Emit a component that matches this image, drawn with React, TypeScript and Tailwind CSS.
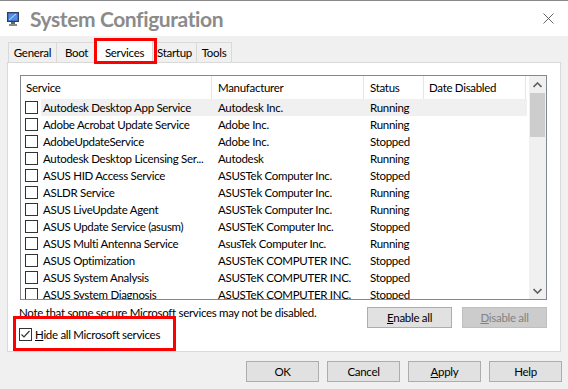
import React from 'react';

interface Service {
  name: string;
  maker: string;
  status: string;
}

const services: Service[] = [
  { name: 'Autodesk Desktop App Service', maker: 'Autodesk Inc.', status: 'Running' },
  { name: 'Adobe Acrobat Update Service', maker: 'Adobe Inc.', status: 'Running' },
  { name: 'AdobeUpdateService', maker: 'Adobe Inc.', status: 'Stopped' },
  { name: 'Autodesk Desktop Licensing Ser...', maker: 'Autodesk', status: 'Running' },
  { name: 'ASUS HID Access Service', maker: 'ASUSTek Computer Inc.', status: 'Stopped' },
  { name: 'ASLDR Service', maker: 'ASUSTek Computer Inc.', status: 'Running' },
  { name: 'ASUS LiveUpdate Agent', maker: 'ASUSTek Computer Inc.', status: 'Running' },
  { name: 'ASUS Update Service (asusm)', maker: 'ASUSTeK Computer Inc.', status: 'Stopped' },
  { name: 'ASUS Multi Antenna Service', maker: 'AsusTek Computer Inc.', status: 'Running' },
  { name: 'ASUS Optimization', maker: 'ASUSTeK COMPUTER INC.', status: 'Stopped' },
  { name: 'ASUS System Analysis', maker: 'ASUSTeK COMPUTER INC.', status: 'Stopped' },
  { name: 'ASUS System Diagnosis', maker: 'ASUSTeK COMPUTER INC.', status: 'Stopped' },
];

function Checkbox({ checked = false }: { checked?: boolean }) {
  return (
    <div className="w-[13px] h-[13px] shrink-0 border border-[#333] bg-white flex items-center justify-center">
      {checked && (
        <svg width="11" height="11" viewBox="0 0 11 11">
          <path d="M1.5 5.5 L4 8 L9.5 2" fill="none" stroke="#333" strokeWidth="1.2" />
        </svg>
      )}
    </div>
  );
}

function Button({ children, disabled = false, className = '' }: { children: React.ReactNode; disabled?: boolean; className?: string }) {
  return (
    <div
      className={`h-[21px] flex items-center justify-center border ${
        disabled ? 'bg-[#cccccc] border-[#bfbfbf] text-[#838383]' : 'bg-[#e1e1e1] border-[#adadad] text-black'
      } ${className}`}
    >
      {children}
    </div>
  );
}

function AppIcon() {
  return (
    <svg width="12" height="16" viewBox="0 0 12 16">
      <rect x="0.5" y="1.5" width="11" height="9" fill="#2a5db0" stroke="#3a3a5a" />
      <rect x="1.5" y="2.5" width="9" height="7" fill="#4f8ee8" />
      <path d="M2 9 L9 3" stroke="#cfe2ff" strokeWidth="1" />
      <rect x="4" y="11" width="4" height="2" fill="#666" />
      <rect x="2" y="13" width="8" height="2" fill="#8a8a8a" />
    </svg>
  );
}

export default function App() {
  return (
    <div className="w-[568px] h-[389px] bg-[#f0f0f0] overflow-hidden relative font-['Lato',sans-serif] text-[11.5px] tracking-[-0.3px] text-black leading-[15px]">
      <div className="h-px bg-[#8a8a8a]" />

      {/* Title bar */}
      <div className="h-[35px] bg-white flex items-center pl-[7px] pr-[14px]">
        <AppIcon />
        <span className="ml-[11px] text-[21px] leading-[26px] font-bold text-[#8b8b8b] tracking-[-0.4px]">System Configuration</span>
        <svg className="ml-auto" width="11" height="11" viewBox="0 0 11 11">
          <path d="M0.5 0.5 L10.5 10.5 M10.5 0.5 L0.5 10.5" stroke="#555" strokeWidth="0.9" />
        </svg>
      </div>

      {/* Tabs */}
      <div className="flex items-end h-[22px] mt-[4px] pl-[8px] relative z-10">
        <div className="w-[49px] h-[20px] flex items-center justify-center border border-b-0 border-[#d9d9d9]">General</div>
        <div className="w-[40px] h-[20px] flex items-center justify-center border border-l-0 border-b-0 border-[#d9d9d9]">Boot</div>
        <div className="w-[56px] h-[23px] -mb-px flex items-center justify-center bg-white border border-l-0 border-b-0 border-[#d9d9d9]">Services</div>
        <div className="w-[44px] h-[20px] flex items-center justify-center border border-l-0 border-b-0 border-[#d9d9d9]">Startup</div>
        <div className="w-[35px] h-[20px] flex items-center justify-center border border-l-0 border-b-0 border-[#d9d9d9]">Tools</div>
      </div>

      {/* Panel */}
      <div className="ml-[7px] w-[554px] h-[290px] bg-white border border-[#d9d9d9] px-[12px] pt-[12px]">
        <div className="w-[527px] h-[225px] border border-[#828790] flex overflow-hidden">
          <div className="flex-1 flex flex-col">
            <div className="h-[23px] shrink-0 grid grid-cols-[191px_152px_60px_102px]">
              <div className="flex items-center pl-[5px] border-r border-[#e5e5e5]">Service</div>
              <div className="flex items-center pl-[6px] border-r border-[#e5e5e5]">Manufacturer</div>
              <div className="flex items-center pl-[6px] border-r border-[#e5e5e5]">Status</div>
              <div className="flex items-center pl-[5px] border-r border-[#e5e5e5]">Date Disabled</div>
            </div>
            {services.map((s, i) => (
              <div key={s.name} className="h-[17px] shrink-0 flex items-center">
                <div className="w-[20px] shrink-0 flex justify-end pr-[3px]">
                  <Checkbox />
                </div>
                <div className={`h-[17px] w-[486px] grid grid-cols-[171px_152px_60px_103px] items-center ${i === 0 ? 'bg-[#f0f0f0]' : ''}`}>
                  <div className="pl-[2px] whitespace-nowrap">{s.name}</div>
                  <div className="pl-[6px] whitespace-nowrap">{s.maker}</div>
                  <div className="pl-[6px]">{s.status}</div>
                  <div />
                </div>
              </div>
            ))}
          </div>
          {/* Scrollbar */}
          <div className="w-[17px] shrink-0 bg-[#f0f0f0] flex flex-col items-center">
            <div className="h-[17px] flex items-center justify-center">
              <svg width="9" height="6" viewBox="0 0 9 6">
                <path d="M0.5 5 L4.5 1 L8.5 5" fill="none" stroke="#606060" strokeWidth="1.6" />
              </svg>
            </div>
            <div className="w-[15px] h-[44px] bg-[#cdcdcd]" />
            <div className="flex-1" />
            <div className="h-[17px] flex items-center justify-center">
              <svg width="9" height="6" viewBox="0 0 9 6">
                <path d="M0.5 1 L4.5 5 L8.5 1" fill="none" stroke="#606060" strokeWidth="1.6" />
              </svg>
            </div>
          </div>
        </div>

        <div className="flex mt-[5px]">
          <div className="-ml-[1px]">Note that some secure Microsoft services may not be disabled.</div>
          <div className="ml-auto mr-[1px] flex gap-[10px] mt-[2px]">
            <Button className="w-[85px]"><span className="underline">E</span>nable all</Button>
            <Button disabled className="w-[85px]"><span className="underline">D</span>isable all</Button>
          </div>
        </div>

        <div className="flex items-center -mt-[1px] -ml-[1px]">
          <Checkbox checked />
          <span className="ml-[3px]"><span className="underline">H</span>ide all Microsoft services</span>
        </div>
      </div>

      {/* Bottom buttons */}
      <div className="flex justify-end gap-[8px] pr-[6px] mt-[9px]">
        <Button className="w-[73px]">OK</Button>
        <Button className="w-[73px]">Cancel</Button>
        <Button className="w-[73px]"><span className="underline">A</span>pply</Button>
        <Button className="w-[73px]">Help</Button>
      </div>

      {/* Red highlight boxes */}
      <div className="absolute left-[94px] top-[38px] w-[63px] h-[26px] border-[3px] border-[#ff0000] z-20" />
      <div className="absolute left-[13px] top-[316px] w-[163px] h-[35px] border-[3px] border-[#ff0000] z-20" />
    </div>
  );
}
